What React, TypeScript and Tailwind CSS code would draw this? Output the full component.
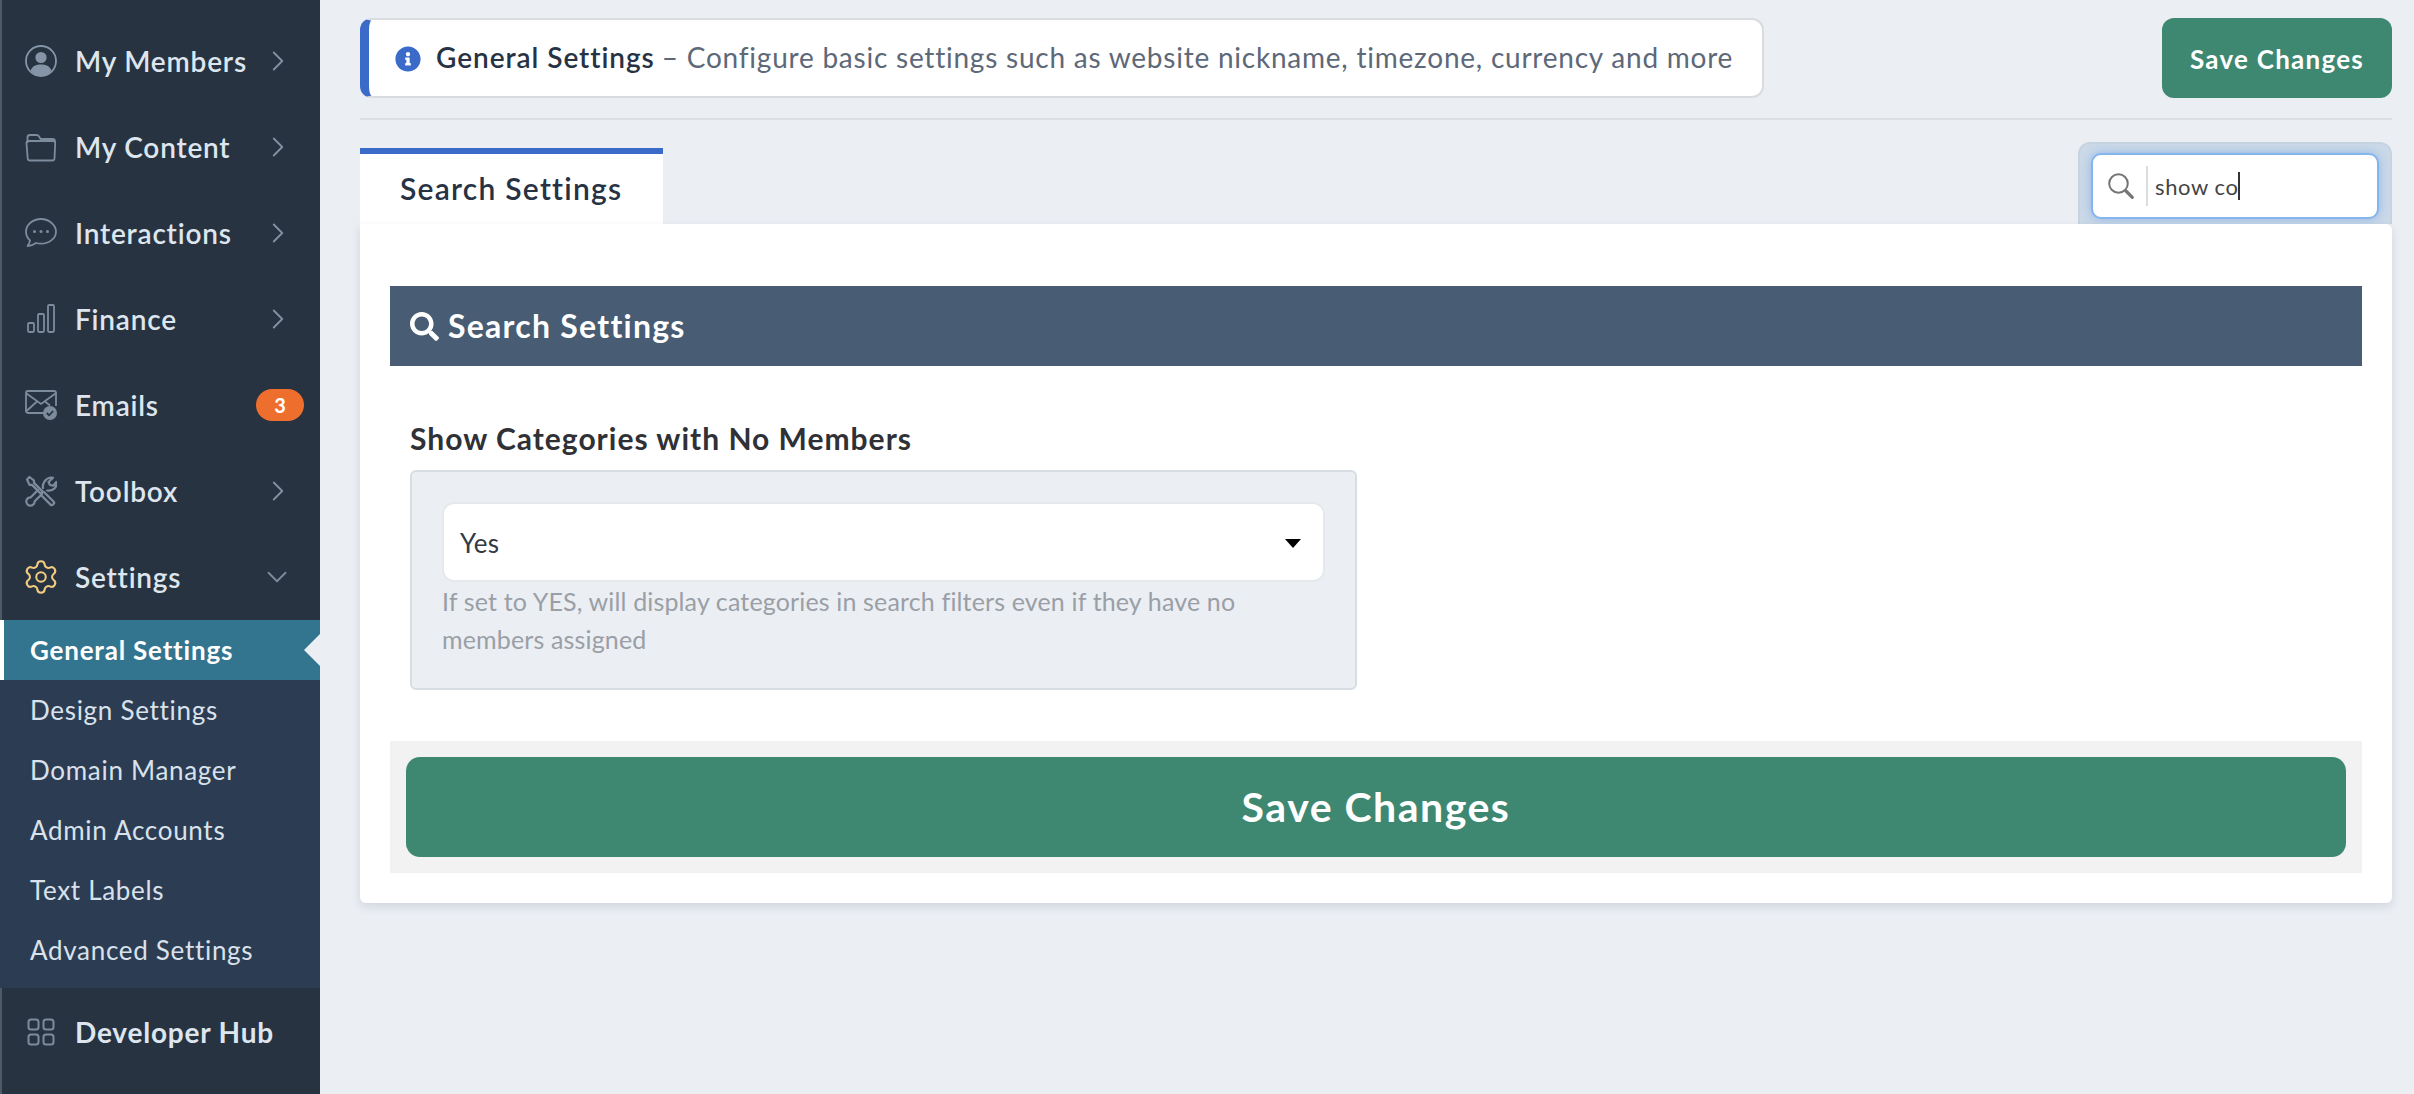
import React from 'react';
import { ChevronDown, ChevronRight, Settings } from 'lucide-react';
import { FaInfoCircle, FaSearch } from 'react-icons/fa';

const UserIcon = () => (
  <svg width="32" height="32" viewBox="0 0 32 32" fill="none">
    <circle cx="16" cy="16" r="15" stroke="#8595a7" strokeWidth="1.8" />
    <circle cx="16" cy="12.5" r="5.6" fill="#8595a7" />
    <path d="M5.500 25.500C7.500 21 11 19.500 16 19.500s8.500 1.500 10.500 6C24 29 20 31 16 31S8 29 5.500 25.500Z" fill="#8595a7" />
  </svg>
);

const FolderIcon = () => (
  <svg width="32" height="32" viewBox="0 0 32 32" fill="none" stroke="#7d8c9d" strokeWidth="1.8" strokeLinejoin="round">
    <path d="M2.500 12V6.500C2.500 5 3.500 4 5 4h6.500c1.200 0 2 .6 2.600 1.500L15.500 8h12c1.500 0 2.500 1 2.500 2.500V12" />
    <path d="M3.500 10H28c1.400 0 2.300 1 2.200 2.400l-.7 15c-.1 1.300-1 2.100-2.200 2.100H5c-1.300 0-2.200-.8-2.300-2.100L1.500 12.400C1.400 11 2.200 10 3.500 10Z" />
  </svg>
);

const ChatIcon = () => (
  <svg width="32" height="32" viewBox="0 0 32 32" fill="none">
    <path d="M16 2C7.700 2 1 7.700 1 14.700c0 3.400 1.500 6.400 4 8.700-.3 1.900-1.300 4-2.400 5.600 3.300-.3 6.200-1.400 8.400-3 1.600.5 3.200.7 5 .7 8.300 0 15-5.600 15-12S24.300 2 16 2Z" stroke="#7d8c9d" strokeWidth="1.800" strokeLinejoin="round" />
    <circle cx="9.500" cy="14.500" r="1.500" fill="#7d8c9d" />
    <circle cx="16" cy="14.500" r="1.500" fill="#7d8c9d" />
    <circle cx="22.500" cy="14.500" r="1.500" fill="#7d8c9d" />
  </svg>
);

const BarsIcon = () => (
  <svg width="32" height="32" viewBox="0 0 32 32" fill="none" stroke="#7d8c9d" strokeWidth="1.800">
    <rect x="3" y="20" width="6" height="9" rx="1.200" />
    <rect x="13" y="11" width="6" height="18" rx="1.200" />
    <rect x="23" y="2" width="6" height="27" rx="1.200" />
  </svg>
);

const MailIcon = () => (
  <svg width="32" height="32" viewBox="0 0 32 32" fill="none">
    <path d="M21 24H3c-1.200 0-2-.8-2-2V4c0-1.200.8-2 2-2h26c1.200 0 2 .8 2 2v13" stroke="#7d8c9d" strokeWidth="1.800" />
    <path d="M1.500 4.500 16 15 30.500 4.500M1.500 22 12 12.500M20 12.500l5 4" stroke="#7d8c9d" strokeWidth="1.800" />
    <circle cx="25" cy="24" r="7" fill="#7d8c9d" />
    <path d="m21.800 24 2.300 2.300 4-4.300" stroke="#283341" strokeWidth="1.800" />
  </svg>
);

const ToolsIcon = () => (
  <svg width="32" height="32" viewBox="0 0 32 32" fill="none" stroke="#7d8c9d" strokeWidth="2.200" strokeLinejoin="round" strokeLinecap="round">
    <path d="M2 4.500 4.500 2 9 5.500v2.400l9 9-2 2-9-9H4.500Z" />
    <path d="m19 17 9.500 9.500c.8.8.8 1.700.2 2.300l-.9.900c-.7.700-1.600.6-2.300-.1L16 20" />
    <path d="M13 15 5.800 22.300a4.200 4.200 0 1 0 3.900 3.900L17 19" />
    <path d="M18 13c-.9-3.800 1.900-9.800 8-10.500 1 0 1.500 0 2 .3l-4.500 4.200 1.500 3 3.300.7 3-3.700c1 5-3 9.500-9 8.500" />
  </svg>
);

const GridIcon = () => (
  <svg width="32" height="32" viewBox="0 0 32 32" fill="none" stroke="#7d8c9d" strokeWidth="2" className="mb-[3px]">
    <rect x="3.500" y="3.500" width="10" height="10" rx="2.500" />
    <rect x="18.500" y="3.500" width="10" height="10" rx="2.500" />
    <rect x="3.500" y="18.500" width="10" height="10" rx="2.500" />
    <rect x="18.500" y="18.500" width="10" height="10" rx="2.500" />
  </svg>
);

const MagnifierIcon = () => (
  <svg width="26" height="26" viewBox="0 0 26 26" fill="none" stroke="#757575" strokeLinecap="round">
    <circle cx="10.500" cy="10.500" r="9.300" strokeWidth="2" />
    <path d="m18 18 6.300 6.300" strokeWidth="3.200" />
  </svg>
);

const mainNav = [
  { label: 'My Members', icon: <UserIcon /> },
  { label: 'My Content', icon: <FolderIcon /> },
  { label: 'Interactions', icon: <ChatIcon /> },
  { label: 'Finance', icon: <BarsIcon /> },
  { label: 'Emails', icon: <MailIcon />, badge: '3' },
  { label: 'Toolbox', icon: <ToolsIcon /> },
];

const subNav = ['Design Settings', 'Domain Manager', 'Admin Accounts', 'Text Labels', 'Advanced Settings'];

const Sidebar: React.FC = () => (
  <aside className="w-[320px] shrink-0 bg-[#283341] border-l-2 border-[#4e5a68] pt-[18px] h-full">
    {mainNav.map(item => (
      <div key={item.label} className="flex items-center h-[86px] pl-[23px]">
        {item.icon}
        <span className="ml-[18px] text-[28px] font-semibold tracking-[0.8px] text-[#dde6ef]">{item.label}</span>
        {item.badge ? (
          <span className="ml-auto mr-[16px] w-[48px] h-[32px] rounded-full bg-[#ee6f2d] text-white text-[20px] font-bold flex items-center justify-center">
            {item.badge}
          </span>
        ) : (
          <ChevronRight size={34} strokeWidth={1.3} className="ml-auto mr-[25px] text-[#8392a3]" />
        )}
      </div>
    ))}

    {/* Settings, open */}
    <div className="flex items-center h-[86px] pl-[20px]">
      <Settings size={38} strokeWidth={1.3} className="text-[#f3cb80]" />
      <span className="ml-[15px] text-[28px] font-semibold tracking-[0.8px] text-[#dde6ef]">Settings</span>
      <ChevronDown size={34} strokeWidth={1.3} className="ml-auto mr-[26px] text-[#7d8c9d]" />
    </div>
    <div className="bg-[#2c3c52] pb-[8px] -ml-[2px] pl-[2px]">
      <div className="relative -ml-[2px] h-[60px] bg-[#33758e] border-l-4 border-white flex items-center pl-[26px]">
        <span className="text-[26px] font-bold tracking-[0.8px] text-white">General Settings</span>
        <div className="absolute right-0 top-[14px] w-0 h-0 border-y-[16px] border-y-transparent border-r-[16px] border-r-[#ebeef3]" />
      </div>
      {subNav.map(label => (
        <div key={label} className="h-[60px] flex items-center pl-[28px] text-[26px] tracking-[0.7px] text-[#d9e2ec]">
          {label}
        </div>
      ))}
    </div>
    <div className="flex items-center h-[90px] pl-[23px]">
      <GridIcon />
      <span className="ml-[18px] text-[28px] font-bold tracking-[0.8px] text-[#dde6ef] pb-[3px]">Developer Hub</span>
    </div>
  </aside>
);

export default function App() {
  return (
    <div className="flex w-full h-screen overflow-hidden bg-[#ebeef3] font-['Lato',sans-serif]">
      <Sidebar />
      <main className="flex-1 pl-[40px] pr-[22px] pt-[18px]">
        {/* Page intro */}
        <div className="flex items-start justify-between border-b-2 border-[#dcdee2] pb-[20px] mb-[28px]">
          <div className="w-[1404px] h-[80px] bg-white rounded-xl border-2 border-l-[9px] border-[#d9dbdf] border-l-[#3b6bc8] flex items-center pl-[26px]">
            <FaInfoCircle size={26} className="text-[#3b6bc8] mt-[2px]" />
            <span className="ml-[15px] pb-[2px] text-[28px] font-semibold tracking-[0.95px] text-[#273344]">General Settings</span>
            <span className="ml-[7px] pb-[2px] text-[28px] tracking-[0.77px] text-[#5d6878]">– Configure basic settings such as website nickname, timezone, currency and more</span>
          </div>
          <button className="w-[230px] h-[80px] pt-[2px] rounded-xl bg-[#3e8871] text-white text-[26px] font-bold tracking-[1.25px]">Save Changes</button>
        </div>

        {/* Tab row */}
        <div className="flex items-end justify-between h-[76px]">
          <div className="w-[303px] h-[76px] bg-white border-t-[6px] border-[#3b6bc8] flex items-center pl-[40px] pb-[2px] text-[30px] font-semibold tracking-[1.25px] text-[#273344]">
            Search Settings
          </div>
          <div className="w-[314px] h-[82px] rounded-t-xl bg-[#cbd9e8] border-2 border-b-0 border-[#c6d3e1] px-[11px] pt-[9px]">
            <div className="h-[66px] bg-white rounded-[10px] border-2 border-[#85b5ee] shadow-[0_0_10px_rgba(90,150,225,0.5)] flex items-center pl-[15px]">
              <MagnifierIcon />
              <div className="w-[2px] h-[40px] bg-[#dcdcdc] ml-[12px]" />
              <span className="ml-[7px] text-[22px] tracking-[0.6px] text-[#444444]">show co</span>
              <div className="w-[2px] h-[28px] bg-[#333333] -ml-[1px]" />
            </div>
          </div>
        </div>

        {/* Settings panel */}
        <div className="relative bg-white rounded-b-md rounded-tr-md shadow-[0_4px_10px_rgba(40,60,90,0.13)] px-[30px] pt-[62px] pb-[30px]">
          <div className="h-[80px] bg-[#485c74] flex items-center pl-[20px] text-white">
            <FaSearch size={29} />
            <span className="ml-[9px] text-[32px] font-bold tracking-[1.25px]">Search Settings</span>
          </div>

          <div className="px-[20px] pt-[54px] pb-[51px]">
            <div className="text-[30px] font-bold leading-[36px] tracking-[1px] text-[#2f3136] mb-[14px]">Show Categories with No Members</div>
            <div className="w-[947px] h-[220px] bg-[#ebeef3] border-2 border-[#d8dde3] rounded-md px-[30px] pt-[30px]">
              <div className="h-[80px] pt-[2px] bg-white border-2 border-[#e6e8ec] rounded-xl flex items-center justify-between pl-[16px] pr-[22px] text-[26px] tracking-[0.3px] text-[#333a45]">
                Yes
                <div className="w-0 h-0 border-x-[8px] border-x-transparent border-t-[9px] border-t-black" />
              </div>
              <p className="text-[25px] leading-[38px] tracking-[0.15px] text-[#9a9fa6]">
                If set to YES, will display categories in search filters even if they have no members assigned
              </p>
            </div>
          </div>

          <div className="bg-[#f2f2f2] p-[16px]">
            <button className="w-full h-[100px] rounded-[14px] bg-[#3e8871] text-white text-[41px] font-bold tracking-[1.5px]">Save Changes</button>
          </div>
        </div>
      </main>
    </div>
  );
}
